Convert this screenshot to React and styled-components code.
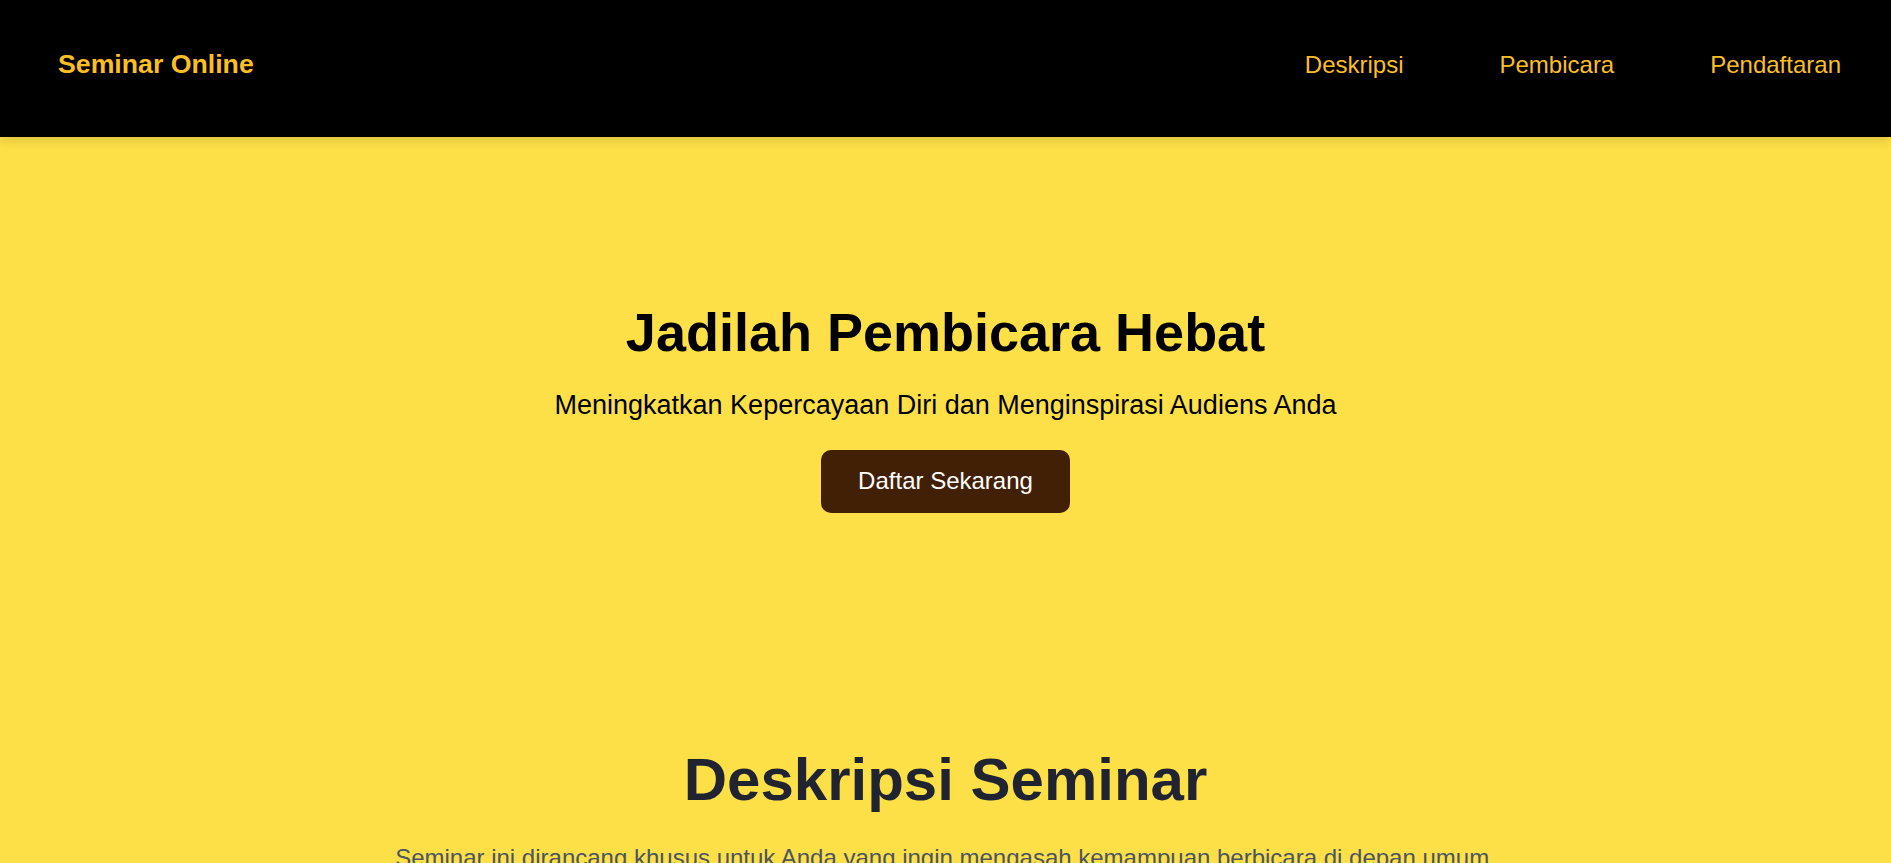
import React from 'react';
import styled, { createGlobalStyle } from 'styled-components';

const GlobalStyle = createGlobalStyle`
  * {
    box-sizing: border-box;
  }
  body {
    margin: 0;
    font-family: "Liberation Sans", Arial, sans-serif;
    background-color: #fde047;
  }
`;

const Header = styled.header`
  position: relative;
  z-index: 1;
  height: 137px;
  padding: 0 50px 8px 58px;
  background-color: #000;
  display: flex;
  align-items: center;
  justify-content: space-between;
  box-shadow: 0 4px 10px rgba(0, 0, 0, 0.12);
`;

const Logo = styled.div`
  font-size: 26.7px;
  font-weight: 700;
  color: #fbbf24;
`;

const Nav = styled.nav`
  display: flex;
  gap: 96px;
`;

const NavLink = styled.a`
  font-size: 24px;
  color: #fbbf24;
  text-decoration: none;
`;

const Hero = styled.section`
  padding: 163px 2rem 161px;
  display: flex;
  flex-direction: column;
  align-items: center;
  text-align: center;
`;

const HeroTitle = styled.h1`
  margin: 0 0 24px;
  font-size: 54px;
  line-height: 1.2;
  font-weight: 700;
  color: #000;
`;

const HeroSubtitle = styled.p`
  margin: 0 0 29px;
  font-size: 27px;
  line-height: 1.2;
  color: #000;
`;

const CtaButton = styled.a`
  display: inline-flex;
  align-items: center;
  height: 63px;
  padding: 0 37px;
  border-radius: 10px;
  background-color: #422006;
  color: #fff;
  font-size: 24px;
  line-height: 1.2;
  text-decoration: none;
`;

const Description = styled.section`
  padding: 70px 2rem 4rem;
  display: flex;
  flex-direction: column;
  align-items: center;
  text-align: center;
`;

const SectionTitle = styled.h2`
  margin: 0 0 28px;
  font-size: 60px;
  line-height: 1.2;
  font-weight: 700;
  color: #1f2430;
`;

const SectionText = styled.p`
  max-width: 1150px;
  margin: 0;
  font-size: 24px;
  line-height: 1.2;
  color: #4b5563;
`;

const App = () => (
  <>
    <GlobalStyle />
    <Header>
      <Logo>Seminar Online</Logo>
      <Nav>
        <NavLink href="#deskripsi">Deskripsi</NavLink>
        <NavLink href="#pembicara">Pembicara</NavLink>
        <NavLink href="#pendaftaran">Pendaftaran</NavLink>
      </Nav>
    </Header>
    <Hero>
      <HeroTitle>Jadilah Pembicara Hebat</HeroTitle>
      <HeroSubtitle>Meningkatkan Kepercayaan Diri dan Menginspirasi Audiens Anda</HeroSubtitle>
      <CtaButton href="#pendaftaran">Daftar Sekarang</CtaButton>
    </Hero>
    <Description id="deskripsi">
      <SectionTitle>Deskripsi Seminar</SectionTitle>
      <SectionText>
        Seminar ini dirancang khusus untuk Anda yang ingin mengasah kemampuan berbicara di depan umum.
      </SectionText>
    </Description>
  </>
);

export default App;
